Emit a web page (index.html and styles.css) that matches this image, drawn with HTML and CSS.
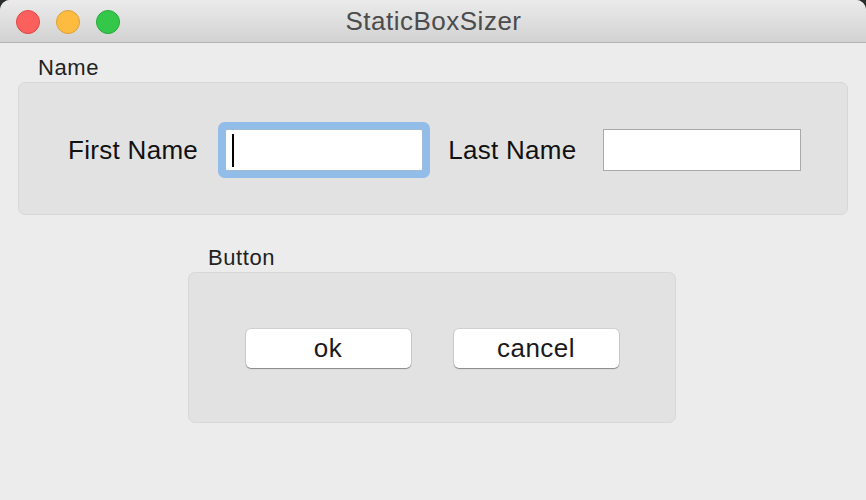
FILE: index.html
```html
<!DOCTYPE html>
<html lang="en">
<head>
<meta charset="utf-8">
<title>StaticBoxSizer</title>
<link rel="stylesheet" href="styles.css">
</head>
<body>
<div class="window">
  <div class="titlebar">
    <div class="lights">
      <span class="light red"></span>
      <span class="light yellow"></span>
      <span class="light green"></span>
    </div>
    <div class="title">StaticBoxSizer</div>
  </div>
  <div class="content">
    <div class="group group-name">
      <div class="group-label">Name</div>
      <div class="group-box">
        <div class="field-row">
          <span class="label">First Name</span>
          <div class="textfield focused" role="textbox"><span class="caret"></span></div>
          <span class="label">Last Name</span>
          <div class="textfield" role="textbox"></div>
        </div>
      </div>
    </div>
    <div class="group group-button">
      <div class="group-label">Button</div>
      <div class="group-box">
        <div class="button-row">
          <button class="btn" type="button">ok</button>
          <button class="btn" type="button">cancel</button>
        </div>
      </div>
    </div>
  </div>
</div>
</body>
</html>
```
FILE: styles.css
```css
html, body {
  margin: 0;
  padding: 0;
  background: #2b2f2b;
}
body {
  font-family: "Liberation Sans", Arial, sans-serif;
  color: #1e1e1e;
}
.window {
  width: 866px;
  height: 500px;
  background: #ececec;
  border-radius: 10px 10px 0 0;
  overflow: hidden;
  display: flex;
  flex-direction: column;
}
.titlebar {
  height: 42px;
  border-bottom: 1px solid #b3b3b3;
  background: linear-gradient(#ebebeb, #d2d2d2);
  position: relative;
  display: flex;
  align-items: center;
  justify-content: center;
}
.lights {
  position: absolute;
  left: 16px;
  top: 10px;
  display: flex;
  gap: 16px;
}
.light {
  width: 22px;
  height: 22px;
  border-radius: 50%;
  display: block;
}
.red { background: #fc605c; border: 1px solid #df4744; }
.yellow { background: #fdbc40; border: 1px solid #de9f34; }
.green { background: #34c84a; border: 1px solid #27a83a; }
.title {
  font-size: 26px;
  letter-spacing: 0.5px;
  color: #4c4c4c;
  line-height: 30px;
  margin-left: 1px;
}
.content {
  flex: 1;
  display: flex;
  flex-direction: column;
  padding-top: 12px;
}
.group-label {
  font-size: 22px;
  line-height: 26px;
  letter-spacing: 0.6px;
  padding-left: 20px;
  margin-bottom: 1px;
  color: #222;
}
.group-box {
  background: #e2e2e2;
  border: 1px solid #d7d7d7;
  border-radius: 7px;
  box-sizing: border-box;
}
.group-name {
  margin: 0 18px;
}
.group-name .group-box {
  height: 133px;
  padding: 38px 0 0 49px;
}
.field-row {
  display: flex;
  align-items: center;
  height: 58px;
}
.label {
  font-size: 26px;
  line-height: 30px;
  letter-spacing: 0.3px;
  color: #111;
}
.textfield {
  width: 198px;
  height: 42px;
  box-sizing: border-box;
  background: #fff;
  border: 1px solid #a9a9a9;
  position: relative;
}
.field-row .label:first-child { margin-right: 27px; }
.textfield.focused {
  border-color: #9fb9d6;
  box-shadow: 0 0 0 7px #93bde9;
  border-radius: 2px;
  margin-right: 25px;
}
.field-row .label:nth-child(3) { margin-right: 26px; }
.caret {
  position: absolute;
  left: 6px;
  top: 4px;
  width: 2px;
  height: 33px;
  background: #000;
}
.group-button {
  margin: 30px 0 0 188px;
  width: 488px;
}
.group-button .group-box {
  height: 151px;
  display: flex;
  align-items: center;
  justify-content: center;
}
.button-row {
  display: flex;
  gap: 43px;
  margin-top: 1px;
}
.btn {
  width: 165px;
  height: 39px;
  background: #fff;
  border: none;
  border-radius: 5px;
  box-shadow: 0 1px 1px rgba(0,0,0,0.35), 0 0 0 1px rgba(0,0,0,0.08);
  font-family: "Liberation Sans", Arial, sans-serif;
  font-size: 26px;
  letter-spacing: 0.5px;
  line-height: 39px;
  padding: 0;
  color: #1a1a1a;
}
```
